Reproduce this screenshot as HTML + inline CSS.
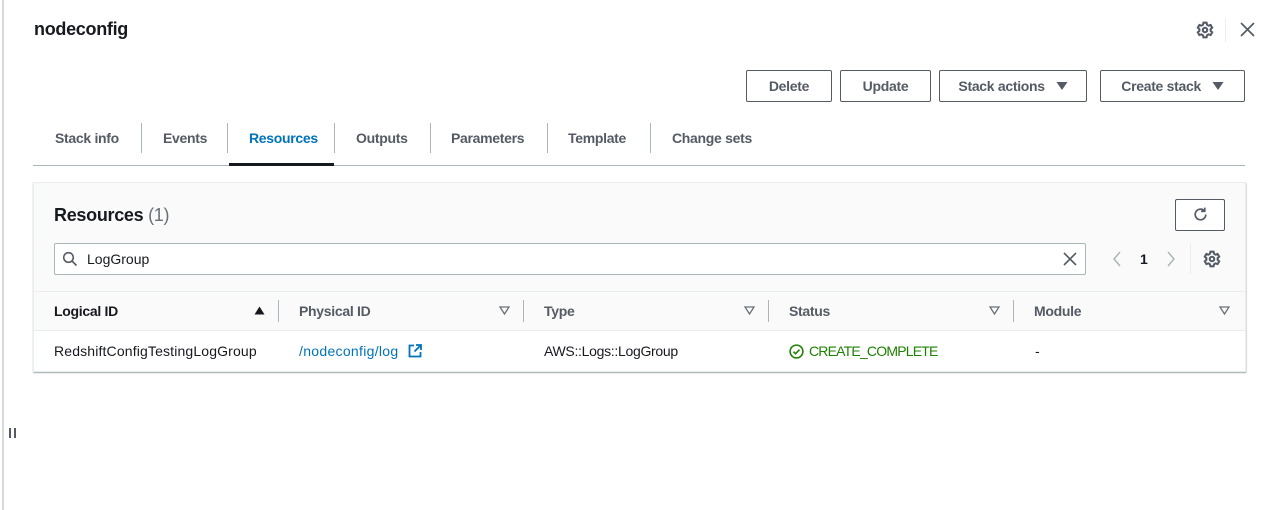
<!DOCTYPE html>
<html><head><meta charset="utf-8"><style>
*{margin:0;padding:0;box-sizing:border-box}
body{width:1271px;height:510px;background:#fff;font-family:"Liberation Sans",Arial,sans-serif;color:#16191f;position:relative;overflow:hidden;font-size:14px;letter-spacing:-0.3px}
.a{position:absolute;white-space:nowrap}
.b{font-weight:bold}
.btn{position:absolute;border:1px solid #545b64;border-radius:2px;background:#fff;font-weight:bold;color:#545b64;font-size:14px;display:flex;align-items:center;justify-content:center;height:32px;top:70px}
.tab{position:absolute;top:130px;font-weight:bold;color:#545b64}
.tsep{position:absolute;top:123px;width:1px;height:30px;background:#aab7b8}
.csep{position:absolute;top:300px;width:1px;height:22px;background:#aab7b8}
.tri{position:absolute;top:306px}
</style></head><body>
<div class="a" style="left:2px;top:0;width:2px;height:510px;background:#d5dbdb"></div>
<div class="a" style="left:9px;top:428px;width:2px;height:10px;background:#545b64"></div>
<div class="a" style="left:14px;top:428px;width:2px;height:10px;background:#545b64"></div>

<div class="a b" style="left:34px;top:19px;font-size:18px">nodeconfig</div>
<svg class="a" style="left:1196px;top:21px" width="18" height="18" viewBox="0 0 16 16" fill="none" stroke="#545b64" stroke-width="1.8"><path d="M6.6 1.5h2.8l.4 1.8 1.4.8 1.8-.6 1.4 2.4-1.4 1.3v1.6l1.4 1.3-1.4 2.4-1.8-.6-1.4.8-.4 1.8H6.6l-.4-1.8-1.4-.8-1.8.6-1.4-2.4 1.4-1.3V7.2L1.6 5.9 3 3.5l1.8.6 1.4-.8z"/><circle cx="8" cy="8" r="2"/></svg>
<div class="a" style="left:1225px;top:18px;width:1px;height:24px;background:#eaeded"></div>
<svg class="a" style="left:1240px;top:22px" width="15" height="15" viewBox="0 0 15 15" stroke="#545b64" stroke-width="1.7"><path d="M1 1l13 13M14 1L1 14"/></svg>

<div class="btn" style="left:746px;width:86px">Delete</div>
<div class="btn" style="left:840px;width:91px">Update</div>
<div class="btn" style="left:939px;width:148px">Stack actions&nbsp;&nbsp;&nbsp;<svg width="12" height="10"><path d="M0.5 1h11L6 9z" fill="#545b64"/></svg></div>
<div class="btn" style="left:1100px;width:145px">Create stack&nbsp;&nbsp;&nbsp;<svg width="12" height="10"><path d="M0.5 1h11L6 9z" fill="#545b64"/></svg></div>

<div class="tab" style="left:55px">Stack info</div>
<div class="tsep" style="left:141px"></div>
<div class="tab" style="left:163px">Events</div>
<div class="tsep" style="left:227px"></div>
<div class="tab" style="left:249px;color:#0073bb">Resources</div>
<div class="tsep" style="left:334px"></div>
<div class="tab" style="left:356px">Outputs</div>
<div class="tsep" style="left:430px"></div>
<div class="tab" style="left:451px">Parameters</div>
<div class="tsep" style="left:547px"></div>
<div class="tab" style="left:568px">Template</div>
<div class="tsep" style="left:650px"></div>
<div class="tab" style="left:672px">Change sets</div>
<div class="a" style="left:33px;top:165px;width:1212px;height:1px;background:#aab7b8"></div>
<div class="a" style="left:229px;top:163px;width:105px;height:3px;background:#16191f"></div>

<div class="a" style="left:33px;top:182px;width:1213px;height:190px;background:#fafafa;border:1px solid #eaeded;box-shadow:0 1px 1px rgba(0,28,36,.3),1px 1px 1px rgba(0,28,36,.1)"></div>
<div class="a" style="left:34px;top:291px;width:1211px;height:1px;background:#eaeded"></div>
<div class="a" style="left:34px;top:330px;width:1211px;height:41px;background:#fff;border-top:1px solid #eaeded"></div>

<div class="a" style="left:54px;top:205px;font-size:18px"><b>Resources</b> <span style="color:#687078">(1)</span></div>
<div class="a" style="left:1175px;top:199px;width:50px;height:32px;border:1px solid #545b64;border-radius:2px;background:#fff"></div>
<svg class="a" style="left:1192px;top:206px" width="17" height="17" viewBox="0 0 16 16" fill="none" stroke="#545b64" stroke-width="1.6"><path d="M13 8a5 5 0 1 1-1.5-3.6"/><path d="M12 1.5v3.5H8.5"/></svg>

<div class="a" style="left:54px;top:243px;width:1032px;height:32px;background:#fff;border:1px solid #aab7b8;border-radius:2px"></div>
<svg class="a" style="left:62px;top:251px" width="16" height="16" viewBox="0 0 16 16" fill="none" stroke="#545b64" stroke-width="1.6"><circle cx="6.5" cy="6.5" r="4.8"/><path d="M10 10l4.5 4.5"/></svg>
<div class="a" style="left:87px;top:251px;letter-spacing:0">LogGroup</div>
<svg class="a" style="left:1063px;top:252px" width="14" height="14" viewBox="0 0 14 14" stroke="#545b64" stroke-width="1.6"><path d="M1 1l12 12M13 1L1 13"/></svg>
<svg class="a" style="left:1112px;top:251px" width="10" height="16" viewBox="0 0 10 16" fill="none" stroke="#aab7b8" stroke-width="1.5"><path d="M8 1L2 8l6 7"/></svg>
<div class="a b" style="left:1140px;top:251px">1</div>
<svg class="a" style="left:1166px;top:251px" width="10" height="16" viewBox="0 0 10 16" fill="none" stroke="#aab7b8" stroke-width="1.5"><path d="M2 1l6 7-6 7"/></svg>
<div class="a" style="left:1190px;top:244px;width:1px;height:30px;background:#eaeded"></div>
<svg class="a" style="left:1203px;top:250px" width="18" height="18" viewBox="0 0 16 16" fill="none" stroke="#545b64" stroke-width="1.8"><path d="M6.6 1.5h2.8l.4 1.8 1.4.8 1.8-.6 1.4 2.4-1.4 1.3v1.6l1.4 1.3-1.4 2.4-1.8-.6-1.4.8-.4 1.8H6.6l-.4-1.8-1.4-.8-1.8.6-1.4-2.4 1.4-1.3V7.2L1.6 5.9 3 3.5l1.8.6 1.4-.8z"/><circle cx="8" cy="8" r="2"/></svg>

<div class="a b" style="left:54px;top:303px">Logical ID</div>
<div class="a b" style="left:299px;top:303px;color:#545b64">Physical ID</div>
<div class="a b" style="left:544px;top:303px;color:#545b64">Type</div>
<div class="a b" style="left:789px;top:303px;color:#545b64">Status</div>
<div class="a b" style="left:1034px;top:303px;color:#545b64">Module</div>
<svg class="tri" style="left:254px" width="11" height="9"><path d="M0.5 8.5h10L5.5 0.5z" fill="#16191f"/></svg>
<svg class="tri" style="left:499px" width="11" height="9"><path d="M1 1h9L5.5 8z" fill="none" stroke="#687078" stroke-width="1.3"/></svg>
<svg class="tri" style="left:744px" width="11" height="9"><path d="M1 1h9L5.5 8z" fill="none" stroke="#687078" stroke-width="1.3"/></svg>
<svg class="tri" style="left:989px" width="11" height="9"><path d="M1 1h9L5.5 8z" fill="none" stroke="#687078" stroke-width="1.3"/></svg>
<svg class="tri" style="left:1219px" width="11" height="9"><path d="M1 1h9L5.5 8z" fill="none" stroke="#687078" stroke-width="1.3"/></svg>
<div class="csep" style="left:278px"></div>
<div class="csep" style="left:523px"></div>
<div class="csep" style="left:768px"></div>
<div class="csep" style="left:1013px"></div>

<div class="a" style="left:54px;top:343px;letter-spacing:0.15px">RedshiftConfigTestingLogGroup</div>
<div class="a" style="left:299px;top:343px;color:#0073bb;letter-spacing:0.3px">/nodeconfig/log</div>
<svg class="a" style="left:408px;top:344px" width="14" height="14" viewBox="0 0 14 14" fill="none" stroke="#0073bb" stroke-width="1.8"><path d="M6 1.5H1.5v11h11V8"/><path d="M8 1h5v5M13 1L6.5 7.5"/></svg>
<div class="a" style="left:544px;top:343px">AWS::Logs::LogGroup</div>
<svg class="a" style="left:789px;top:344px" width="15" height="15" viewBox="0 0 16 16" fill="none" stroke="#1d8102" stroke-width="1.7"><circle cx="8" cy="8" r="6.8"/><path d="M4.8 8.2l2.2 2.2 4.2-4.4"/></svg>
<div class="a" style="left:809px;top:343px;color:#1d8102;letter-spacing:-0.8px">CREATE_COMPLETE</div>
<div class="a" style="left:1035px;top:343px">-</div>
</body></html>
